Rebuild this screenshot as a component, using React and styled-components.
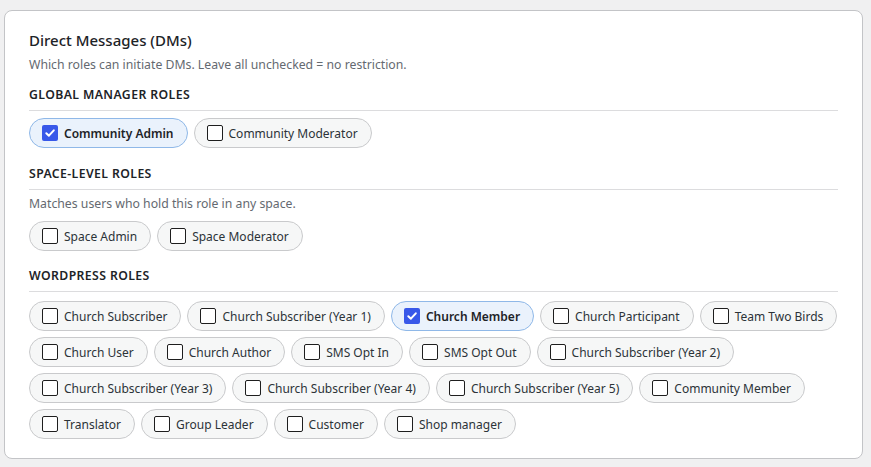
import React from "react";
import styled, { createGlobalStyle } from "styled-components";

const Global = createGlobalStyle`
  html, body { margin: 0; padding: 0; background: #f0f0f1; }
  body { font-family: "Noto Sans", "Open Sans", sans-serif; color: #1d2327; }
  * { box-sizing: border-box; }
`;

const Page = styled.div`
  padding: 10px 8px 8px 4px;
`;

const Card = styled.section`
  background: #fff;
  border: 1px solid #c3c4c7;
  border-radius: 8px;
  padding: 19px 24px 19px 24px;
`;

const Title = styled.h3`
  margin: 0;
  font-size: 15px;
  font-weight: 500;
  line-height: 20px;
  color: #1d2327;
`;

const Description = styled.p`
  margin: ${(p) => p.$mt || 0}px 0 0;
  font-size: 12.25px;
  line-height: 18px;
  color: #646970;
`;

const GroupHeading = styled.h4`
  margin: ${(p) => p.$mt}px 0 0;
  padding-bottom: 6px;
  border-bottom: 1px solid #dcdcde;
  font-size: 12.25px;
  font-weight: 600;
  letter-spacing: 0.4px;
  line-height: 18px;
  text-transform: uppercase;
  color: #1d2327;
`;

const ChipList = styled.div`
  display: flex;
  flex-wrap: wrap;
  gap: 6px;
  margin-top: ${(p) => p.$mt}px;
`;

const Chip = styled.label`
  display: inline-flex;
  align-items: center;
  gap: 6px;
  height: 30px;
  padding: 0 13px 0 12px;
  border-radius: 999px;
  border: 1px solid ${(p) => (p.$checked ? "#8fb8e8" : "#c9cacc")};
  background: ${(p) => (p.$checked ? "#eaf2fc" : "#f6f7f7")};
  font-size: 12px;
  font-weight: ${(p) => (p.$checked ? 600 : 400)};
  color: ${(p) => (p.$checked ? "#1d2327" : "#2c3338")};
  white-space: nowrap;
  cursor: pointer;
`;

const Box = styled.span`
  width: 16px;
  height: 16px;
  flex: none;
  border-radius: 2px;
  display: inline-flex;
  align-items: center;
  justify-content: center;
  background: ${(p) => (p.$checked ? "#3858e9" : "#fff")};
  border: ${(p) => (p.$checked ? "none" : "1px solid #1e1e1e")};
`;

function RoleChip({ label, checked }) {
  return (
    <Chip $checked={checked}>
      <Box $checked={checked}>
        {checked && (
          <svg width="12" height="12" viewBox="0 0 12 12">
            <path d="M2.3 6.2 L4.9 8.7 L9.8 3.3" fill="none" stroke="#fff" strokeWidth="2" strokeLinecap="round" strokeLinejoin="round" />
          </svg>
        )}
      </Box>
      {label}
    </Chip>
  );
}

const globalRoles = [
  { label: "Community Admin", checked: true },
  { label: "Community Moderator" },
];
const spaceRoles = [{ label: "Space Admin" }, { label: "Space Moderator" }];
const wpRoles = [
  { label: "Church Subscriber" },
  { label: "Church Subscriber (Year 1)" },
  { label: "Church Member", checked: true },
  { label: "Church Participant" },
  { label: "Team Two Birds" },
  { label: "Church User" },
  { label: "Church Author" },
  { label: "SMS Opt In" },
  { label: "SMS Opt Out" },
  { label: "Church Subscriber (Year 2)" },
  { label: "Church Subscriber (Year 3)" },
  { label: "Church Subscriber (Year 4)" },
  { label: "Church Subscriber (Year 5)" },
  { label: "Community Member" },
  { label: "Translator" },
  { label: "Group Leader" },
  { label: "Customer" },
  { label: "Shop manager" },
];

export default function App() {
  return (
    <Page>
      <Global />
      <Card>
        <Title>Direct Messages (DMs)</Title>
        <Description $mt={6}>Which roles can initiate DMs. Leave all unchecked = no restriction.</Description>
        <GroupHeading $mt={12}>Global Manager Roles</GroupHeading>
        <ChipList $mt={7}>
          {globalRoles.map((r) => <RoleChip key={r.label} {...r} />)}
        </ChipList>
        <GroupHeading $mt={17}>Space-Level Roles</GroupHeading>
        <Description $mt={5}>Matches users who hold this role in any space.</Description>
        <ChipList $mt={8}>
          {spaceRoles.map((r) => <RoleChip key={r.label} {...r} />)}
        </ChipList>
        <GroupHeading $mt={16}>WordPress Roles</GroupHeading>
        <ChipList $mt={9}>
          {wpRoles.map((r) => <RoleChip key={r.label} {...r} />)}
        </ChipList>
      </Card>
    </Page>
  );
}
